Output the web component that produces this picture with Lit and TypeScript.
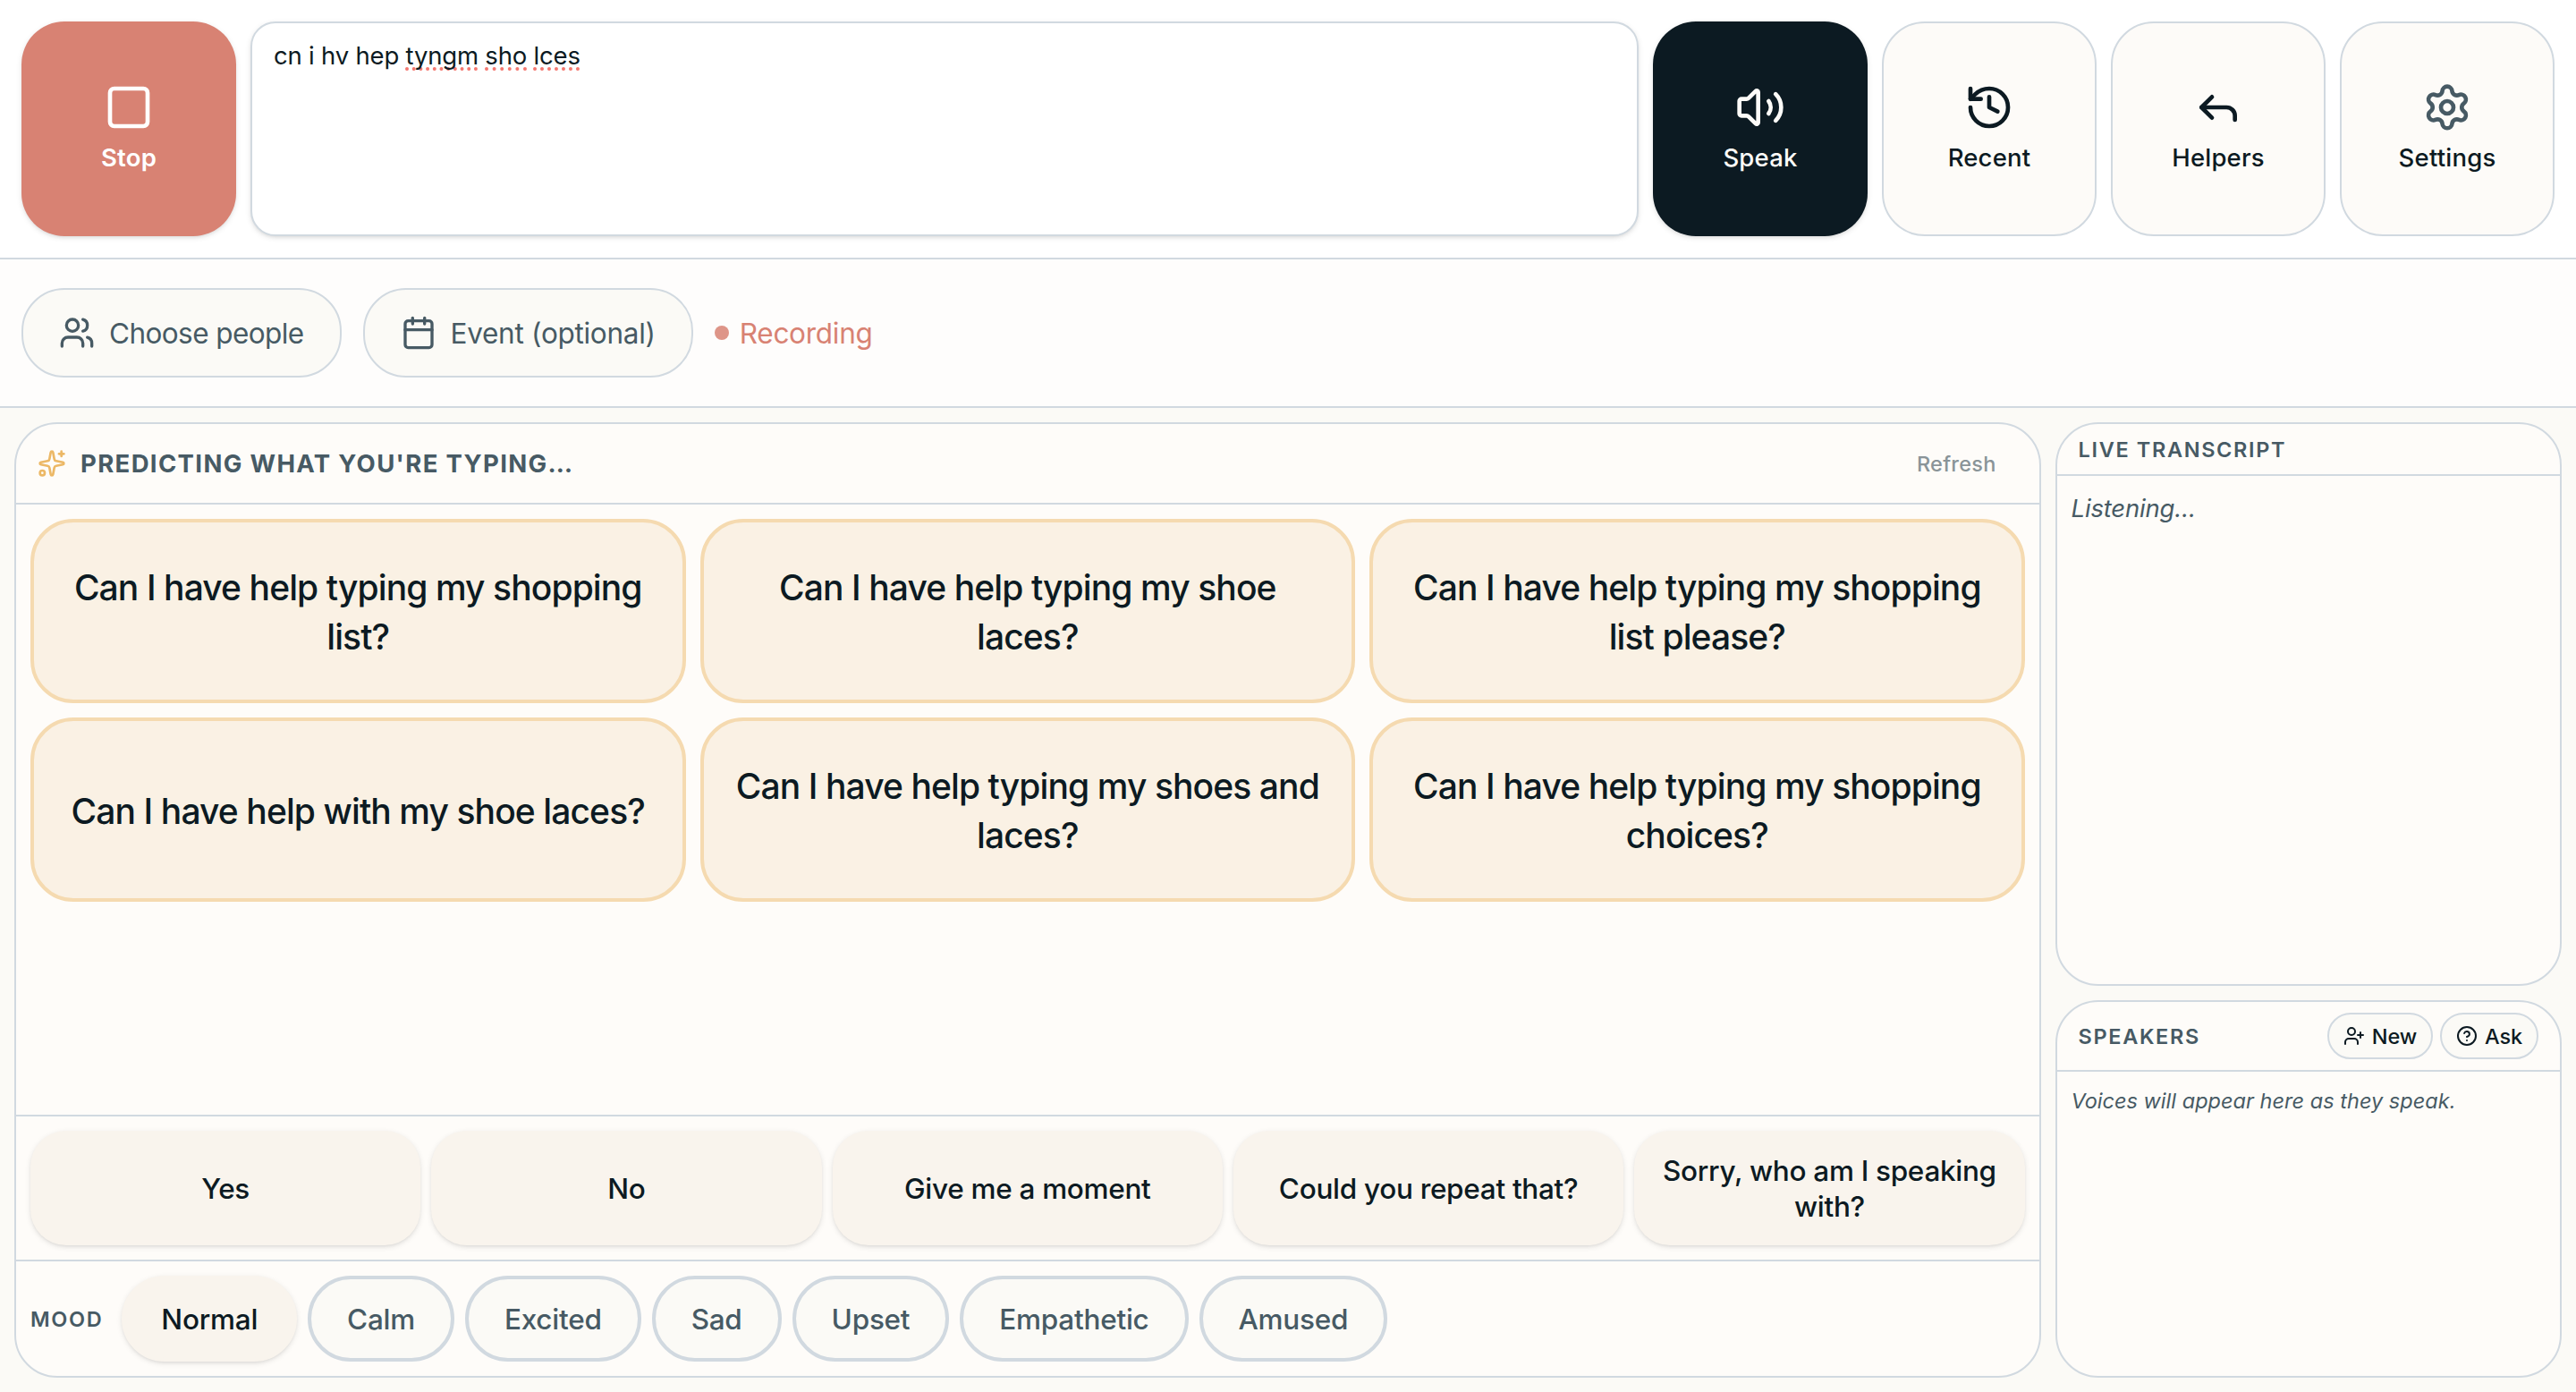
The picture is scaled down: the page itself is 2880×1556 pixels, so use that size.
import { LitElement, html, css, svg } from "lit";
import { customElement, property } from "lit/decorators.js";
import { classMap } from "lit/directives/class-map.js";

const ICONS = {
  square: svg`<rect width="18" height="18" x="3" y="3" rx="2"/>`,
  volume: svg`<path d="M11 4.702a.705.705 0 0 0-1.203-.498L6.413 7.587A1.4 1.4 0 0 1 5.416 8H3a1 1 0 0 0-1 1v6a1 1 0 0 0 1 1h2.416a1.4 1.4 0 0 1 .997.413l3.383 3.384A.705.705 0 0 0 11 19.298z"/><path d="M16 9a5 5 0 0 1 0 6"/><path d="M19.364 18.364a9 9 0 0 0 0-12.728"/>`,
  history: svg`<path d="M3 12a9 9 0 1 0 9-9 9.75 9.75 0 0 0-6.74 2.74L3 8"/><path d="M3 3v5h5"/><path d="M12 7v5l4 2"/>`,
  reply: svg`<path d="M20 18v-2a4 4 0 0 0-4-4H4"/><path d="m9 17-5-5 5-5"/>`,
  settings: svg`<path d="M9.671 4.136a2.34 2.34 0 0 1 4.659 0 2.34 2.34 0 0 0 3.319 1.915 2.34 2.34 0 0 1 2.33 4.033 2.34 2.34 0 0 0 0 3.831 2.34 2.34 0 0 1-2.33 4.033 2.34 2.34 0 0 0-3.319 1.915 2.34 2.34 0 0 1-4.659 0 2.34 2.34 0 0 0-3.32-1.915 2.34 2.34 0 0 1-2.33-4.033 2.34 2.34 0 0 0 0-3.831A2.34 2.34 0 0 1 6.35 6.051a2.34 2.34 0 0 0 3.319-1.915"/><circle cx="12" cy="12" r="3"/>`,
  users: svg`<path d="M16 21v-2a4 4 0 0 0-4-4H6a4 4 0 0 0-4 4v2"/><path d="M16 3.128a4 4 0 0 1 0 7.744"/><path d="M22 21v-2a4 4 0 0 0-3-3.87"/><circle cx="9" cy="7" r="4"/>`,
  calendar: svg`<path d="M8 2v4"/><path d="M16 2v4"/><rect width="18" height="18" x="3" y="4" rx="2"/><path d="M3 10h18"/>`,
  sparkles: svg`<path d="M11.017 2.814a1 1 0 0 1 1.966 0l1.051 5.558a2 2 0 0 0 1.594 1.594l5.558 1.051a1 1 0 0 1 0 1.966l-5.558 1.051a2 2 0 0 0-1.594 1.594l-1.051 5.558a1 1 0 0 1-1.966 0l-1.051-5.558a2 2 0 0 0-1.594-1.594l-5.558-1.051a1 1 0 0 1 0-1.966l5.558-1.051a2 2 0 0 0 1.594-1.594z"/><path d="M20 2v4"/><path d="M22 4h-4"/><circle cx="4" cy="20" r="2"/>`,
  userPlus: svg`<path d="M16 21v-2a4 4 0 0 0-4-4H6a4 4 0 0 0-4 4v2"/><circle cx="9" cy="7" r="4"/><path d="M19 8v6"/><path d="M22 11h-6"/>`,
  help: svg`<circle cx="12" cy="12" r="10"/><path d="M9.09 9a3 3 0 0 1 5.83 1c0 2-3 3-3 3"/><path d="M12 17h.01"/>`,
};

type IconName = keyof typeof ICONS;

@customElement("ui-icon")
class UiIcon extends LitElement {
  @property() name: IconName = "square";

  static styles = css`
    :host { display: block; flex: none; width: 40px; height: 40px; }
    svg { display: block; width: 100%; height: 100%; fill: none; stroke: currentColor; stroke-width: 2; stroke-linecap: round; stroke-linejoin: round; }
  `;

  render() {
    return html`<svg viewBox="0 0 24 24" aria-hidden="true">${ICONS[this.name]}</svg>`;
  }
}

const ACTIONS: { label: string; icon: IconName; kind: string }[] = [
  { label: "Speak", icon: "volume", kind: "primary" },
  { label: "Recent", icon: "history", kind: "plain" },
  { label: "Helpers", icon: "reply", kind: "plain" },
  { label: "Settings", icon: "settings", kind: "plain muted" },
];

const PREDICTIONS = [
  "Can I have help typing my shopping list?",
  "Can I have help typing my shoe laces?",
  "Can I have help typing my shopping list please?",
  "Can I have help with my shoe laces?",
  "Can I have help typing my shoes and laces?",
  "Can I have help typing my shopping choices?",
];

const QUICK = ["Yes", "No", "Give me a moment", "Could you repeat that?", "Sorry, who am I speaking with?"];

const MOODS = ["Normal", "Calm", "Excited", "Sad", "Upset", "Empathetic", "Amused"];

@customElement("app-root")
class AppRoot extends LitElement {
  static styles = css`
    :host {
      --ink: #0c1a22;
      --muted: #475a64;
      --line: #d1d9e0;
      --paper: #fbfaf6;
      --panel: #fefcf9;
      --coral: #d88273;
      --shadow: 0 2px 6px rgba(0, 0, 0, 0.1), 0 2px 4px -2px rgba(0, 0, 0, 0.1);
      display: flex;
      flex-direction: column;
      box-sizing: border-box;
      width: 100%;
      height: 100vh;
      overflow: hidden;
      background: var(--paper);
      color: var(--ink);
      font-family: Inter, "Liberation Sans", sans-serif;
      font-size: 27.5px;
      line-height: 40px;
    }
    * { box-sizing: border-box; }
    button {
      font: inherit;
      letter-spacing: inherit;
      color: inherit;
      margin: 0;
      border: 0;
      background: none;
      padding: 0;
    }
    .text { margin-top: 1px; margin-bottom: -1px; }
    .top {
      flex: none;
      display: flex;
      gap: 16px;
      padding: 24px;
      height: 290px;
      background: #fff;
      border-bottom: 2px solid var(--line);
    }
    .tile {
      flex: none;
      width: 240px;
      height: 240px;
      border-radius: 48px;
      display: flex;
      flex-direction: column;
      align-items: center;
      justify-content: center;
      gap: 8px;
      font-weight: 500;
      letter-spacing: 0.2px;
    }
    .tile ui-icon { width: 56px; height: 56px; }
    .tile.stop { background: var(--coral); color: #fff; font-weight: 600; box-shadow: var(--shadow); }
    .tile.primary { background: var(--ink); color: #fdfbf8; box-shadow: var(--shadow); }
    .tile.plain { background: #fdfbf8; border: 2px solid var(--line); }
    .tile.muted ui-icon { color: var(--muted); }
    .compose {
      flex: 1;
      min-width: 0;
      border: 2px solid var(--line);
      border-radius: 28px;
      background: #fff;
      padding: 16px 24px;
      letter-spacing: -0.2px;
      box-shadow: var(--shadow);
    }
    .typo {
      text-decoration: underline dotted #f4776f 4px;
      text-decoration-skip-ink: none;
      text-underline-offset: 3px;
    }
    .context {
      flex: none;
      display: flex;
      align-items: center;
      height: 166px;
      padding: 0 24px;
      background: #fefdfc;
      border-bottom: 2px solid var(--line);
      font-size: 31.5px;
      letter-spacing: -0.28px;
      color: var(--muted);
    }
    .chip {
      display: flex;
      align-items: center;
      gap: 16px;
      height: 100px;
      padding: 0 40px;
      margin-right: 24px;
      border: 2px solid var(--line);
      border-radius: 48px;
      background: var(--paper);
    }
    .chip.tight { letter-spacing: -0.58px; }
    .rec { display: flex; align-items: center; gap: 12px; color: var(--coral); }
    .dot { width: 16px; height: 16px; border-radius: 50%; background: var(--coral); opacity: 0.85; }
    .main {
      flex: 1;
      min-height: 0;
      display: grid;
      grid-template-columns: 4fr 1fr;
      gap: 16px;
      padding: 16px;
    }
    .side { display: grid; grid-template-rows: 630fr 422fr; gap: 16px; min-width: 0; }
    .panel {
      display: flex;
      flex-direction: column;
      min-width: 0;
      border: 2px solid var(--line);
      border-radius: 48px;
      background: var(--panel);
      overflow: hidden;
    }
    .head {
      flex: none;
      display: flex;
      align-items: center;
      padding: 0 24px;
      border-bottom: 2px solid var(--line);
      color: var(--muted);
      font-weight: 600;
      font-size: 23.5px;
      letter-spacing: 1.64px;
      text-transform: uppercase;
    }
    .head.big { height: 90px; gap: 16px; font-size: 27.5px; font-weight: 650; letter-spacing: 1.35px; }
    .head.big ui-icon { width: 32px; height: 32px; color: #ecb866; }
    .head.live { height: 58px; }
    .head.speakers { height: 78px; gap: 8px; }
    .grow { flex: 1; }
    .tile .text, .head.big .text { margin: 0; }
    .refresh { padding: 2px 24px 0; font-size: 23.5px; font-weight: 500; letter-spacing: 0.25px; color: #8a9498; }
    .cards {
      flex: 1;
      display: grid;
      grid-template-columns: repeat(3, 1fr);
      grid-auto-rows: 206px;
      gap: 16px;
      padding: 16px;
    }
    .card {
      padding: 2px 32px 0;
      border: 4px solid #f5dab0;
      border-radius: 48px;
      background: #faf1e4;
      font-size: 39px;
      font-weight: 500;
      line-height: 55px;
      letter-spacing: -0.9px;
      text-align: center;
    }
    .quick {
      flex: none;
      display: grid;
      grid-template-columns: repeat(5, 1fr);
      gap: 12px;
      height: 162px;
      padding: 16px;
      border-top: 2px solid var(--line);
    }
    .reply {
      padding: 1px 24px 0;
      border-radius: 40px;
      background: #f9f4ed;
      box-shadow: var(--shadow);
      font-size: 31.5px;
      font-weight: 500;
      line-height: 40px;
      letter-spacing: -0.3px;
      text-align: center;
    }
    .moods {
      flex: none;
      display: flex;
      align-items: center;
      gap: 12px;
      height: 130px;
      padding: 0 16px;
      border-top: 2px solid var(--line);
    }
    .label { margin-right: 9px; font-size: 23.5px; font-weight: 600; letter-spacing: 1.64px; color: var(--muted); }
    .mood {
      height: 96px;
      padding: 1px 40px 0;
      border: 4px solid var(--line);
      border-radius: 48px;
      background: var(--paper);
      font-size: 31.5px;
      font-weight: 500;
      letter-spacing: -0.25px;
      color: var(--muted);
    }
    .mood.on { border-color: #f9f4ed; background: #f9f4ed; color: var(--ink); box-shadow: var(--shadow); }
    .note { padding: 16px; font-style: italic; color: var(--muted); letter-spacing: -0.2px; }
    .note.small { padding-top: 17px; font-size: 23.5px; line-height: 32px; letter-spacing: 0.03px; }
    .pill {
      display: flex;
      align-items: center;
      gap: 8px;
      height: 52px;
      padding: 0 16px;
      border: 2px solid var(--line);
      border-radius: 26px;
      background: var(--paper);
      color: var(--ink);
      font-size: 23.5px;
      font-weight: 450;
      letter-spacing: -0.15px;
      text-transform: none;
    }
    .pill ui-icon { width: 24px; height: 24px; }
  `;

  render() {
    return html`
      <header class="top">
        <button class="tile stop"><ui-icon name="square"></ui-icon><span class="text">Stop</span></button>
        <div class="compose">cn i hv hep <span class="typo">tyngm</span> <span class="typo">sho</span> <span class="typo">lces</span></div>
        ${ACTIONS.map((a) => html`<button class="tile ${a.kind}"><ui-icon name=${a.icon}></ui-icon><span class="text">${a.label}</span></button>`)}
      </header>
      <div class="context">
        <button class="chip tight"><ui-icon name="users"></ui-icon><span class="text">Choose people</span></button>
        <button class="chip"><ui-icon name="calendar"></ui-icon><span class="text">Event (optional)</span></button>
        <div class="rec"><span class="dot"></span><span class="text">Recording</span></div>
      </div>
      <main class="main">
        <section class="panel">
          <div class="head big">
            <ui-icon name="sparkles"></ui-icon><span class="text">Predicting what you're typing…</span><span class="grow"></span>
            <button class="refresh">Refresh</button>
          </div>
          <div class="cards">${PREDICTIONS.map((p) => html`<button class="card">${p}</button>`)}</div>
          <div class="quick">${QUICK.map((q) => html`<button class="reply">${q}</button>`)}</div>
          <div class="moods">
            <span class="label text">MOOD</span>
            ${MOODS.map((m, i) => html`<button class=${classMap({ mood: true, on: i === 0 })}>${m}</button>`)}
          </div>
        </section>
        <div class="side">
          <section class="panel">
            <div class="head live"><span class="text">Live transcript</span></div>
            <div class="note">Listening…</div>
          </section>
          <section class="panel">
            <div class="head speakers">
              <span class="text">Speakers</span><span class="grow"></span>
              <button class="pill"><ui-icon name="userPlus"></ui-icon><span class="text">New</span></button>
              <button class="pill"><ui-icon name="help"></ui-icon><span class="text">Ask</span></button>
            </div>
            <div class="note small">Voices will appear here as they speak.</div>
          </section>
        </div>
      </main>
    `;
  }
}
